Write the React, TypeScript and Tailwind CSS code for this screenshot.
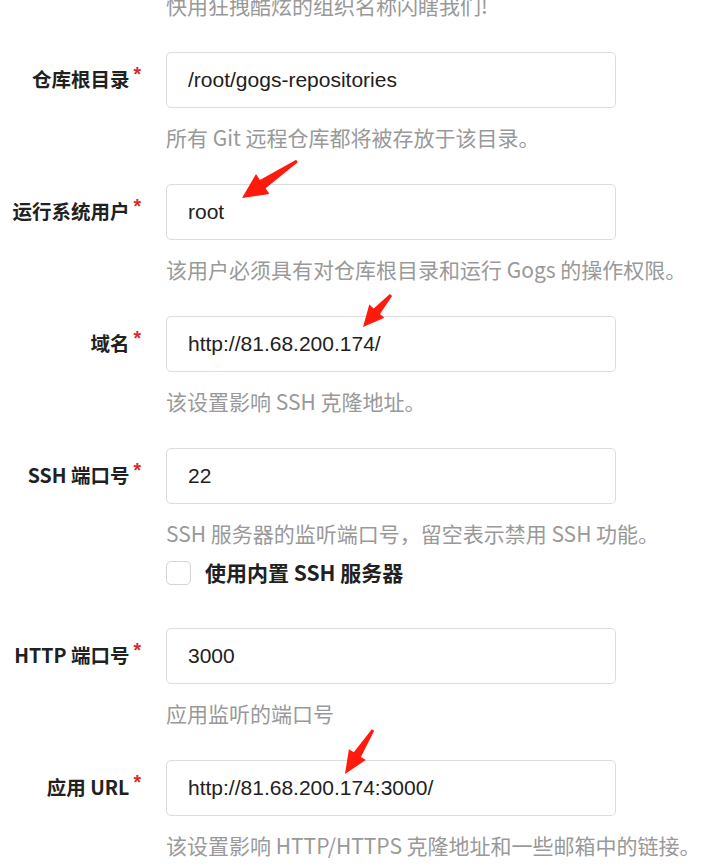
import React from "react";

const CJK = "font-['Noto_Sans_CJK_SC','Noto_Sans',sans-serif]";

type Field = {
  label: string;
  value: string;
  help: string;
};

const fieldsTop: Field[] = [
  { label: "仓库根目录", value: "/root/gogs-repositories", help: "所有 Git 远程仓库都将被存放于该目录。" },
  { label: "运行系统用户", value: "root", help: "该用户必须具有对仓库根目录和运行 Gogs 的操作权限。" },
  { label: "域名", value: "http://81.68.200.174/", help: "该设置影响 SSH 克隆地址。" },
  { label: "SSH 端口号", value: "22", help: "SSH 服务器的监听端口号，留空表示禁用 SSH 功能。" },
];

const fieldsBottom: Field[] = [
  { label: "HTTP 端口号", value: "3000", help: "应用监听的端口号" },
  { label: "应用 URL", value: "http://81.68.200.174:3000/", help: "该设置影响 HTTP/HTTPS 克隆地址和一些邮箱中的链接。" },
];

function Help({ children }: { children: React.ReactNode }) {
  return (
    <p className={`ml-[166px] mt-[14px] h-[30px] leading-[30px] text-[21px] text-[#999] whitespace-nowrap ${CJK}`}>
      {children}
    </p>
  );
}

function Row({ f, first }: { f: Field; first?: boolean }) {
  return (
    <div className={first ? "" : "mt-[32px]"}>
      <div className="flex h-[56px] items-center">
        <label
          className={`w-[141px] shrink-0 text-right text-[19.5px] font-bold text-[#212121] whitespace-nowrap ${CJK}`}
        >
          {f.label}
          <span className="relative -top-[6px] ml-[4px] font-['Liberation_Sans',sans-serif] text-[#db2828]">*</span>
        </label>
        <div className="ml-[25px] flex h-[56px] w-[450px] items-center rounded-[5px] border border-[#dcdcdc] bg-white pl-[21px] font-['Liberation_Sans',Arial,sans-serif] text-[21px] text-[#212121]">
          {f.value}
        </div>
      </div>
      <Help>{f.help}</Help>
    </div>
  );
}

// red annotation arrow from tail (x1,y1) to tip (x2,y2)
function arrowPoints(x1: number, y1: number, x2: number, y2: number, head: number, hw: number) {
  const dx = x2 - x1;
  const dy = y2 - y1;
  const len = Math.hypot(dx, dy);
  const ux = dx / len;
  const uy = dy / len;
  const nx = -uy;
  const ny = ux;
  const bx = x2 - ux * head;
  const by = y2 - uy * head;
  const sw = hw * 0.42;
  const tw = 1.4;
  const p = (x: number, y: number) => `${x.toFixed(1)},${y.toFixed(1)}`;
  return [
    p(x1 + nx * tw, y1 + ny * tw),
    p(bx + nx * sw, by + ny * sw),
    p(bx + nx * hw, by + ny * hw),
    p(x2, y2),
    p(bx - nx * hw, by - ny * hw),
    p(bx - nx * sw, by - ny * sw),
    p(x1 - nx * tw, y1 - ny * tw),
  ].join(" ");
}

function Arrows() {
  return (
    <svg className="pointer-events-none absolute left-0 top-0" width="709" height="864">
      <polygon points={arrowPoints(297, 161, 242, 198, 25, 12)} fill="#ff1a0d" />
      <polygon points={arrowPoints(391, 295, 363, 327, 21, 10)} fill="#ff1a0d" />
      <polygon points={arrowPoints(373, 730, 345, 774, 23, 10)} fill="#ff1a0d" />
    </svg>
  );
}

export default function App() {
  return (
    <div className="relative h-[864px] w-[709px] overflow-hidden bg-white">
      {/* tail of the previous field's help text */}
      <p className={`-mt-[10px] ml-[166px] h-[30px] leading-[30px] text-[21px] text-[#999] whitespace-nowrap ${CJK}`}>
        快用狂拽酷炫的组织名称闪瞎我们!
      </p>

      <div className="mt-[32px]">
        {fieldsTop.map((f, i) => (
          <Row key={f.label} f={f} first={i === 0} />
        ))}
      </div>

      {/* builtin ssh server */}
      <div className="ml-[166px] mt-[12px] flex h-[25px] items-center">
        <span className="h-[24px] w-[25px] rounded-[5px] border border-[#d4d4d5] bg-white" />
        <span className={`ml-[14px] text-[21px] leading-[25px] font-bold text-[#212121] ${CJK}`}>使用内置 SSH 服务器</span>
      </div>

      <div className="mt-[43px]">
        {fieldsBottom.map((f, i) => (
          <Row key={f.label} f={f} first={i === 0} />
        ))}
      </div>

      <Arrows />
    </div>
  );
}
